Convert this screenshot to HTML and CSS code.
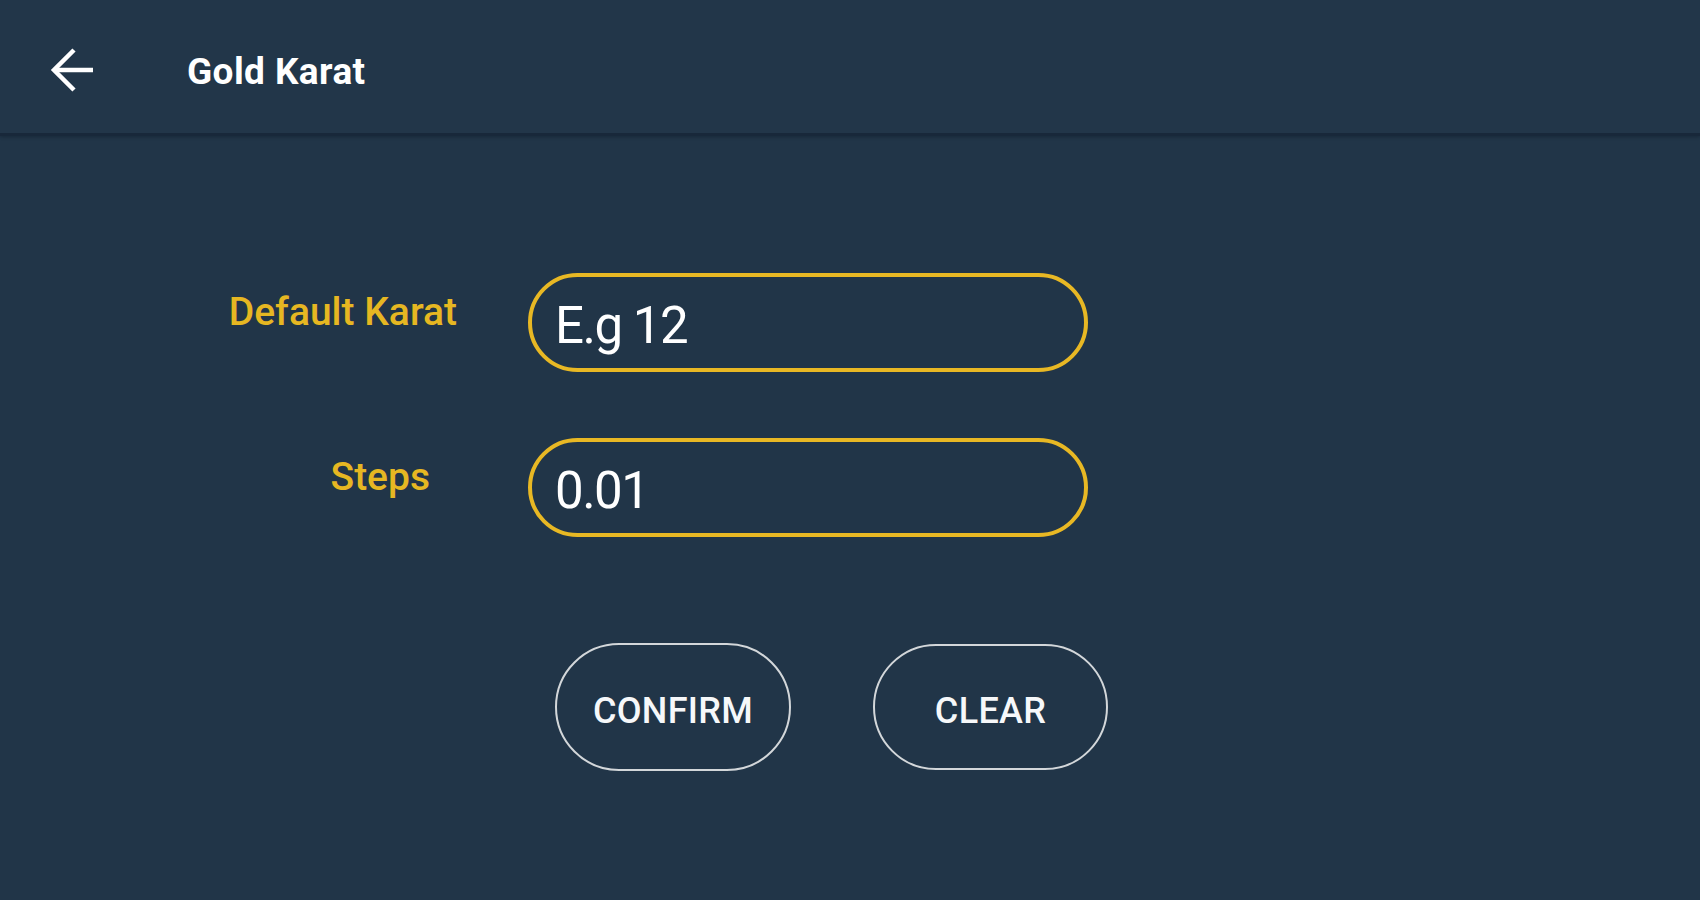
FILE: index.html
```html
<!DOCTYPE html>
<html lang="en">
<head>
<meta charset="utf-8">
<title>Gold Karat</title>
<link rel="stylesheet" href="styles.css">
</head>
<body>
<header class="topbar">
  <button class="back-btn" aria-label="Back">
    <svg class="back-icon" width="48" height="48" viewBox="0 0 48 48" fill="none" stroke="#ffffff" stroke-width="4.5">
      <path d="M45 24H7"/>
      <path d="M26 4L6 24L26 44"/>
    </svg>
  </button>
  <h1 class="title">Gold Karat</h1>
</header>
<main class="form">
  <div class="field">
    <label class="field-label field-label--karat" for="karat">Default Karat</label>
    <input class="field-input" id="karat" type="text" placeholder="E.g 12">
  </div>
  <div class="field field--steps">
    <label class="field-label field-label--steps" for="steps">Steps</label>
    <input class="field-input" id="steps" type="text" value="0.01">
  </div>
  <div class="actions">
    <button class="pill-btn pill-btn--confirm">CONFIRM</button>
    <button class="pill-btn pill-btn--clear">CLEAR</button>
  </div>
</main>
</body>
</html>
```

FILE: styles.css
```css
* {
  box-sizing: border-box;
}

html, body {
  margin: 0;
  padding: 0;
  height: 100%;
}

body {
  background: #213548;
  font-family: Roboto, "Liberation Sans", Arial, sans-serif;
  color: #ffffff;
  overflow: hidden;
}

.topbar {
  height: 136px;
  padding-top: 6px;
  display: flex;
  align-items: center;
  background: #223649;
  border-bottom: 3px solid #18283a;
  box-shadow: 0 1px 3px rgba(10, 20, 30, 0.35);
}

.back-btn {
  margin-left: 48px;
  padding: 0;
  border: none;
  background: transparent;
  width: 48px;
  height: 48px;
  display: flex;
}

.back-icon {
  display: block;
}

.title {
  margin: 4px 0 0 91px;
  font-size: 37px;
  font-weight: 700;
  color: #ffffff;
  letter-spacing: 0.4px;
}

.form {
  padding-top: 137px;
}

.field {
  display: flex;
  align-items: flex-start;
}

.field--steps {
  margin-top: 66px;
}

.field-label {
  width: 528px;
  margin-top: 20px;
  text-align: right;
  font-size: 39px;
  line-height: 39px;
  font-weight: 500;
  color: #e6b722;
}

.field-label--karat {
  padding-right: 71px;
}

.field-label--steps {
  padding-right: 98px;
}

.field-input {
  width: 560px;
  height: 99px;
  border: 4px solid #e8b824;
  border-radius: 50px;
  background: transparent;
  padding: 6px 20px 0 23px;
  font-family: Roboto, "Liberation Sans", Arial, sans-serif;
  font-size: 51px;
  letter-spacing: -1.5px;
  color: #ffffff;
  outline: none;
}

.field-input::placeholder {
  color: #ffffff;
  opacity: 1;
}

.actions {
  margin-top: 106px;
  padding-left: 555px;
  display: flex;
  align-items: center;
  gap: 82px;
}

.pill-btn {
  height: 128px;
  border: 2.5px solid #d3d7da;
  border-radius: 64px;
  background: transparent;
  color: #f6f8fa;
  font-family: Roboto, "Liberation Sans", Arial, sans-serif;
  font-size: 36px;
  font-weight: 500;
  padding: 7px 0 0;
  letter-spacing: 0.3px;
}

.pill-btn--confirm {
  width: 236px;
}

.pill-btn--clear {
  width: 235px;
  height: 126px;
}
```
